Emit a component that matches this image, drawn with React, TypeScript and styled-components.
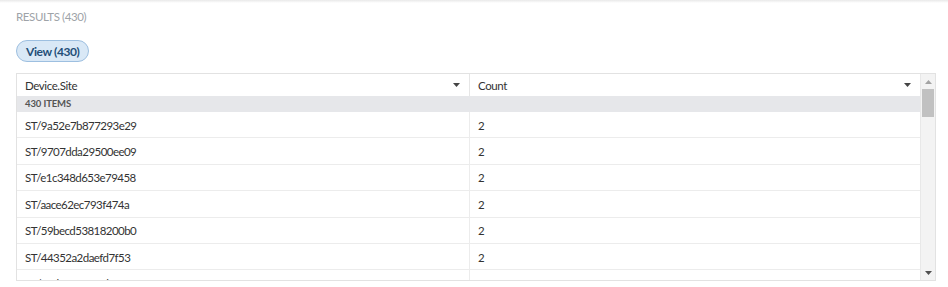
import styled, { createGlobalStyle } from "styled-components";

const rows = [
  "ST/9a52e7b877293e29",
  "ST/9707dda29500ee09",
  "ST/e1c348d653e79458",
  "ST/aace62ec793f474a",
  "ST/59becd53818200b0",
  "ST/44352a2daefd7f53",
  "ST/0f3b1c9a7e2d4a61",
];

const GlobalStyle = createGlobalStyle`
  body {
    margin: 0;
    background: #fff;
    font-family: Lato, "Noto Sans", sans-serif;
    color: #333;
  }
`;

export default function App() {
  return (
    <>
      <GlobalStyle />
      <Page>
        <TopShade />
        <Content>
          <SectionTitle>RESULTS (430)</SectionTitle>
          <ViewPill>View (430)</ViewPill>
          <Grid>
            <Body>
              <HeaderRow>
                <HeaderCell>
                  Device.Site
                  <Caret />
                </HeaderCell>
                <HeaderCell last>
                  Count
                  <Caret />
                </HeaderCell>
              </HeaderRow>
              <GroupRow>430 ITEMS</GroupRow>
              {rows.map((site) => (
                <Row key={site}>
                  <Cell>{site}</Cell>
                  <Cell last>2</Cell>
                </Row>
              ))}
            </Body>
            <ScrollBar>
              <ArrowButton>
                <svg width="7" height="4" viewBox="0 0 7 4">
                  <path d="M0 4 L3.5 0 L7 4 Z" fill="#a3a3a3" />
                </svg>
              </ArrowButton>
              <Track>
                <Thumb />
              </Track>
              <ArrowButton>
                <svg width="7" height="4" viewBox="0 0 7 4">
                  <path d="M0 0 L3.5 4 L7 0 Z" fill="#505050" />
                </svg>
              </ArrowButton>
            </ScrollBar>
          </Grid>
        </Content>
      </Page>
    </>
  );
}

function Caret() {
  return (
    <CaretIcon width="7" height="4" viewBox="0 0 7 4">
      <path d="M0 0 L3.5 4 L7 0 Z" fill="#444" />
    </CaretIcon>
  );
}

const Page = styled.div`
  width: 948px;
  height: 287px;
  overflow: hidden;
  position: relative;
`;

const TopShade = styled.div`
  height: 3px;
  background: linear-gradient(#e9e9e9, #fff);
`;

const Content = styled.div`
  padding: 7px 12px 0 16px;
  display: flex;
  flex-direction: column;
  align-items: flex-start;
`;

const SectionTitle = styled.div`
  font-size: 11.5px;
  letter-spacing: -0.4px;
  color: #9ea3a8;
  line-height: 14px;
  height: 14px;
`;

const ViewPill = styled.div`
  margin-top: 16px;
  height: 20px;
  padding: 0 9px;
  border: 1px solid #9dbfe0;
  border-radius: 11px;
  background: #d9e8f6;
  color: #234e78;
  font-weight: 700;
  font-size: 12px;
  letter-spacing: -0.4px;
  line-height: 21px;
`;

const Grid = styled.div`
  margin-top: 11px;
  width: 920px;
  height: 208px;
  border: 1px solid #e2e2e2;
  box-sizing: border-box;
  display: flex;
  overflow: hidden;
`;

const Body = styled.div`
  flex: 1;
  display: flex;
  flex-direction: column;
  overflow: hidden;
`;

const HeaderRow = styled.div`
  display: flex;
  height: 22px;
  flex-shrink: 0;
`;

const HeaderCell = styled.div<{ last?: boolean }>`
  width: ${(p) => (p.last ? "451px" : "453px")};
  flex: ${(p) => (p.last ? "1" : "none")};
  border-right: ${(p) => (p.last ? "none" : "1px solid #e6e6e6")};
  display: flex;
  align-items: center;
  justify-content: space-between;
  padding: 0 8px 0 8px;
  box-sizing: border-box;
  font-size: 11.5px;
  letter-spacing: -0.4px;
  color: #333;
`;

const CaretIcon = styled.svg`
  margin-right: 1px;
`;

const GroupRow = styled.div`
  height: 16px;
  flex-shrink: 0;
  background: #e6e7ea;
  padding-left: 8px;
  font-size: 9.5px;
  font-weight: 700;
  color: #555;
  line-height: 16px;
  letter-spacing: -0.1px;
`;

const Row = styled.div`
  display: flex;
  height: 26.4px;
  flex-shrink: 0;
  border-bottom: 1px solid #ececec;
  box-sizing: border-box;
`;

const Cell = styled.div<{ last?: boolean }>`
  width: ${(p) => (p.last ? "451px" : "453px")};
  flex: ${(p) => (p.last ? "1" : "none")};
  border-right: ${(p) => (p.last ? "none" : "1px solid #ececec")};
  box-sizing: border-box;
  padding-left: 8px;
  padding-top: 1px;
  display: flex;
  align-items: center;
  font-size: 11.5px;
  letter-spacing: -0.55px;
  color: #333;
`;

const ScrollBar = styled.div`
  width: 15px;
  flex-shrink: 0;
  background: #f3f3f3;
  border-left: 1px solid #e8e8e8;
  box-sizing: border-box;
  display: flex;
  flex-direction: column;
`;

const ArrowButton = styled.div`
  height: 15px;
  display: flex;
  align-items: center;
  justify-content: center;
`;

const Track = styled.div`
  flex: 1;
`;

const Thumb = styled.div`
  margin: 0 1px;
  height: 28px;
  background: #c1c1c1;
`;
